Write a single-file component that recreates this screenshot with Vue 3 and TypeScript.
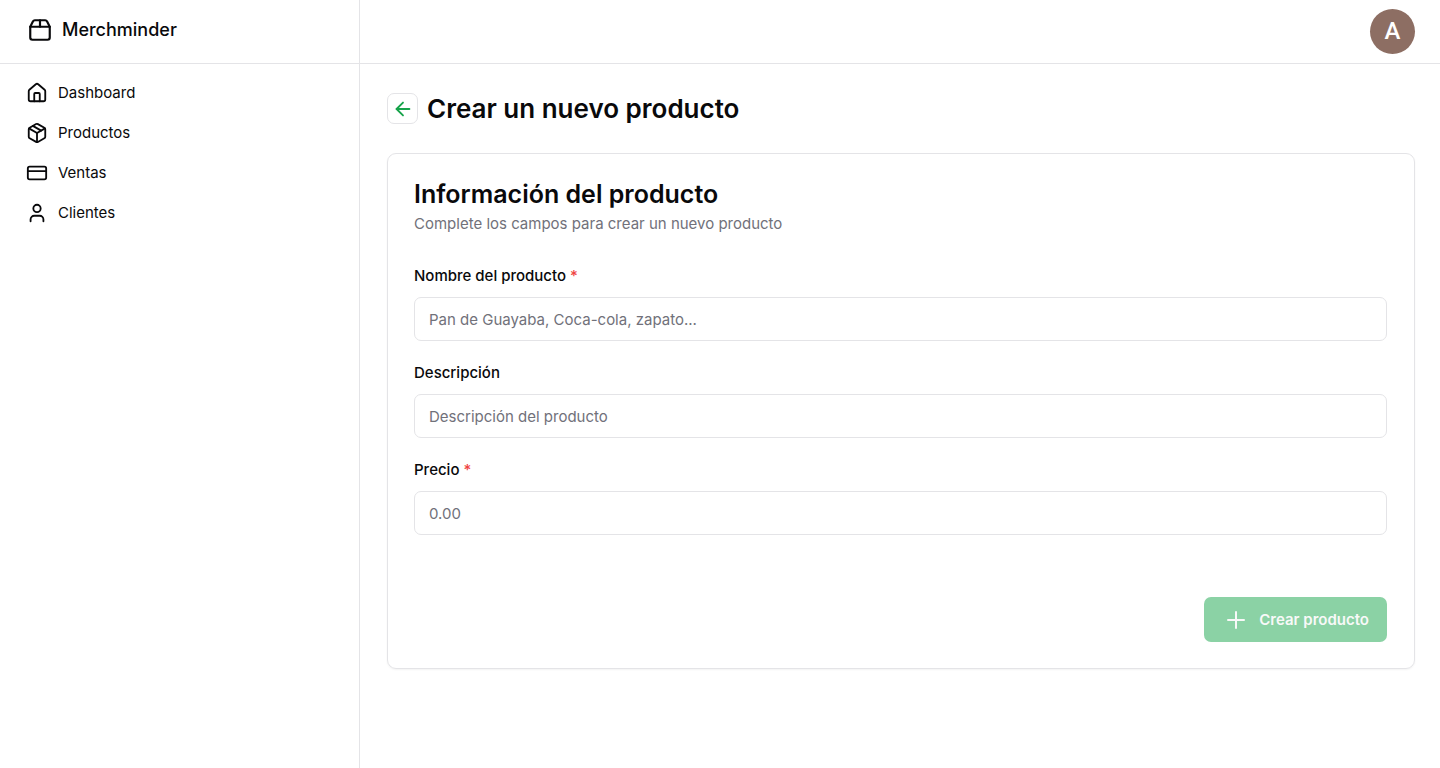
<script setup lang="ts">
import { ref } from 'vue'

interface NavItem {
  label: string
  paths: string[]
}

interface Field {
  id: string
  label: string
  placeholder: string
  required: boolean
}

const navItems: NavItem[] = [
  {
    label: 'Dashboard',
    paths: [
      'M15 21v-8a1 1 0 0 0-1-1h-4a1 1 0 0 0-1 1v8',
      'M3 10a2 2 0 0 1 .709-1.528l7-5.999a2 2 0 0 1 2.582 0l7 5.999A2 2 0 0 1 21 10v9a2 2 0 0 1-2 2H5a2 2 0 0 1-2-2z',
    ],
  },
  {
    label: 'Productos',
    paths: [
      'm7.5 4.27 9 5.15',
      'M21 8a2 2 0 0 0-1-1.73l-7-4a2 2 0 0 0-2 0l-7 4A2 2 0 0 0 3 8v8a2 2 0 0 0 1 1.73l7 4a2 2 0 0 0 2 0l7-4A2 2 0 0 0 21 16Z',
      'm3.3 7 8.7 5 8.7-5',
      'M12 22V12',
    ],
  },
  {
    label: 'Ventas',
    paths: [
      'M4 5h16a2 2 0 0 1 2 2v10a2 2 0 0 1-2 2H4a2 2 0 0 1-2-2V7a2 2 0 0 1 2-2z',
      'M2 10h20',
    ],
  },
  {
    label: 'Clientes',
    paths: [
      'M19 21v-2a4 4 0 0 0-4-4H9a4 4 0 0 0-4 4v2',
      'M16 7a4 4 0 1 1-8 0a4 4 0 0 1 8 0z',
    ],
  },
]

const fields: Field[] = [
  { id: 'name', label: 'Nombre del producto', placeholder: 'Pan de Guayaba, Coca-cola, zapato...', required: true },
  { id: 'description', label: 'Descripción', placeholder: 'Descripción del producto', required: false },
  { id: 'price', label: 'Precio', placeholder: '0.00', required: true },
]

const values = ref<Record<string, string>>({ name: '', description: '', price: '' })
</script>

<template>
  <div class="layout">
    <aside class="sidebar">
      <div class="bar brand-bar">
        <a class="brand" href="#">
          <svg class="icon brand-icon" viewBox="0 0 24 24" aria-hidden="true">
            <path d="M3 9h18v10a2 2 0 0 1-2 2H5a2 2 0 0 1-2-2V9Z" />
            <path d="m3 9 2.45-4.9A2 2 0 0 1 7.24 3h9.52a2 2 0 0 1 1.8 1.1L21 9" />
            <path d="M12 3v6" />
          </svg>
          <span>Merchminder</span>
        </a>
      </div>
      <nav class="nav">
        <a v-for="item in navItems" :key="item.label" class="nav-link" href="#">
          <svg class="icon nav-icon" viewBox="0 0 24 24" aria-hidden="true">
            <path v-for="d in item.paths" :key="d" :d="d" />
          </svg>
          <span>{{ item.label }}</span>
        </a>
      </nav>
    </aside>

    <div class="content">
      <header class="bar top-bar">
        <button class="avatar" type="button">A</button>
      </header>

      <main class="main">
        <div class="page-head">
          <a class="back" href="#" aria-label="Volver">
            <svg class="icon back-icon" viewBox="0 0 24 24" aria-hidden="true">
              <path d="m12 19-7-7 7-7" />
              <path d="M19 12H5" />
            </svg>
          </a>
          <h1 class="page-title">Crear un nuevo producto</h1>
        </div>

        <form class="card" @submit.prevent>
          <div class="card-head">
            <h2 class="card-title">Información del producto</h2>
            <p class="card-text">Complete los campos para crear un nuevo producto</p>
          </div>
          <div class="fields">
            <div v-for="field in fields" :key="field.id" class="field">
              <label class="label" :for="field.id">
                {{ field.label }} <span v-if="field.required" class="star">*</span>
              </label>
              <input :id="field.id" v-model="values[field.id]" class="input" type="text" :placeholder="field.placeholder" />
            </div>
          </div>
          <div class="actions">
            <button class="submit" type="submit" disabled>
              <svg class="icon plus-icon" viewBox="0 0 24 24" aria-hidden="true">
                <path d="M4 12h16" />
                <path d="M12 4v16" />
              </svg>
              <span>Crear producto</span>
            </button>
          </div>
        </form>
      </main>
    </div>
  </div>
</template>

<style>
body {
  margin: 0;
  background: #fff;
}
</style>

<style scoped>
.layout {
  display: grid;
  grid-template-columns: 25% minmax(0, 1fr);
  min-height: 100vh;
  color: #09090b;
  font-family: Inter, sans-serif;
  font-size: 15px;
  line-height: 22px;
}

.layout *,
.layout {
  box-sizing: border-box;
}

.icon {
  flex: none;
  fill: none;
  stroke: currentColor;
  stroke-width: 2;
  stroke-linecap: round;
  stroke-linejoin: round;
}

.sidebar {
  border-right: 1px solid #e4e4e7;
}

.bar {
  display: flex;
  align-items: center;
  height: 64px;
  border-bottom: 1px solid #e4e4e7;
}

.brand-bar {
  padding: 0 27px 3px;
}

.brand {
  display: flex;
  align-items: center;
  gap: 9px;
  color: inherit;
  font-size: 18px;
  font-weight: 500;
  text-decoration: none;
}

.brand-icon {
  width: 26px;
  height: 26px;
}

.nav {
  display: flex;
  flex-direction: column;
  padding: 9px 26px;
}

.nav-link {
  display: flex;
  align-items: center;
  gap: 10px;
  padding: 9px 0;
  color: inherit;
  text-decoration: none;
}

.nav-icon {
  width: 22px;
  height: 22px;
}

.top-bar {
  justify-content: flex-end;
  padding: 0 25px;
}

.avatar {
  width: 45px;
  height: 45px;
  padding: 0;
  border: 0;
  border-radius: 50%;
  background: #8d6e63;
  color: #fff;
  font-family: Roboto, sans-serif;
  font-size: 24px;
  font-weight: 500;
  line-height: 45px;
}

.main {
  padding: 28px 25px 28px 27px;
}

.page-head {
  display: flex;
  align-items: center;
  gap: 9px;
  height: 33px;
  margin-bottom: 28px;
}

.back {
  display: flex;
  align-items: center;
  justify-content: center;
  width: 31px;
  height: 31px;
  border: 1px solid #e4e4e7;
  border-radius: 7px;
  color: #16a34a;
}

.back-icon {
  width: 22px;
  height: 22px;
}

.page-title,
.card-title {
  margin: 0;
  font-size: 26px;
  font-weight: 600;
  line-height: 32px;
}

.card-title {
  font-size: 25px;
}

.card {
  padding: 24px 27px 26px 26px;
  border: 1px solid #e4e4e7;
  border-radius: 9px;
  box-shadow: 0 1px 2px rgb(0 0 0 / 5%);
}

.card-text {
  margin: 3px 0 0;
  color: #71717a;
}

.fields {
  display: grid;
  gap: 21px;
  margin-top: 30px;
}

.field {
  display: grid;
  gap: 10px;
}

.label {
  font-weight: 500;
}

.star {
  color: #ef4444;
}

.input {
  width: 100%;
  height: 44px;
  padding: 0 14px;
  border: 1px solid #e4e4e7;
  border-radius: 7px;
  background: #fff;
  color: inherit;
  font: inherit;
}

.input::placeholder {
  color: #71717a;
  opacity: 1;
}

.actions {
  display: flex;
  justify-content: flex-end;
  margin-top: 62px;
}

.submit {
  display: flex;
  align-items: center;
  gap: 11px;
  height: 45px;
  padding: 0 18px 0 20px;
  border: 0;
  border-radius: 7px;
  background: #8bd2a5;
  color: #f8f9f8;
  font: inherit;
  font-weight: 600;
}

.plus-icon {
  width: 24px;
  height: 24px;
}
</style>
